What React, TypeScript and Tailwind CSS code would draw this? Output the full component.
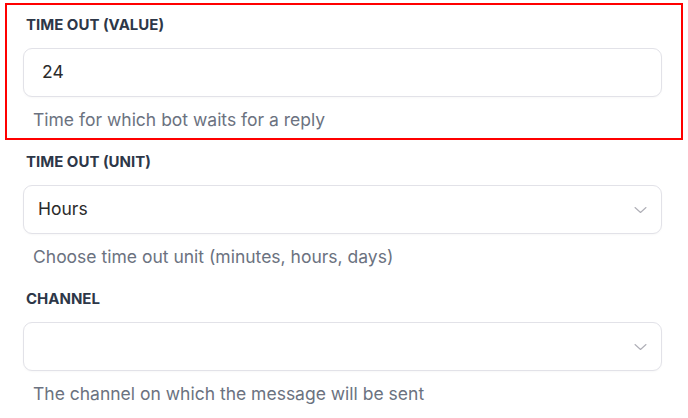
import React from "react";

function Chevron() {
  return (
    <svg width="13" height="8" viewBox="0 0 13 8" fill="none" className="shrink-0">
      <path d="M1 1.5L6.5 6.5L12 1.5" stroke="#aeaeb6" strokeWidth="1.1" strokeLinecap="round" strokeLinejoin="round" />
    </svg>
  );
}

function Field({
  label,
  help,
  children,
  outlined,
}: {
  label: string;
  help: string;
  children: React.ReactNode;
  outlined?: boolean;
}) {
  return (
    <div
      className={
        "flex flex-col pl-[16px] pr-[19px] pt-[11px] pb-[6px] border-2 " +
        (outlined ? "border-[#ff0000]" : "border-transparent")
      }
    >
      <label className="text-[15px] font-bold leading-[18px] text-[#2d3748] pl-[3px]">{label}</label>
      <div className="mt-[14px]">{children}</div>
      <p className="mt-[11px] pl-[10px] text-[17.5px] leading-[24px] text-[#6b7280]">{help}</p>
    </div>
  );
}

export default function App() {
  return (
    <div
      className="w-[688px] h-[418px] bg-white overflow-hidden pt-[3px] pl-[5px] pr-[5px]"
      style={{ fontFamily: "Inter, 'Noto Sans', sans-serif" }}
    >
      <Field label="TIME OUT (VALUE)" help="Time for which bot waits for a reply" outlined>
        <div className="h-[49px] rounded-[9px] border border-[#e2e2e8] bg-white flex items-center pl-[18px] text-[17.5px] text-[#2b2b2b] shadow-[0_1px_2px_rgba(0,0,0,0.03)]">
          24
        </div>
      </Field>
      <Field label="TIME OUT (UNIT)" help="Choose time out unit (minutes, hours, days)">
        <div className="h-[49px] rounded-[9px] border border-[#e2e2e8] bg-white flex items-center justify-between pl-[14px] pr-[14px] text-[17.5px] text-[#2b2b2b] shadow-[0_1px_2px_rgba(0,0,0,0.03)]">
          <span>Hours</span>
          <Chevron />
        </div>
      </Field>
      <Field label="CHANNEL" help="The channel on which the message will be sent">
        <div className="h-[49px] rounded-[9px] border border-[#e2e2e8] bg-white flex items-center justify-end pl-[14px] pr-[14px] shadow-[0_1px_2px_rgba(0,0,0,0.03)]">
          <Chevron />
        </div>
      </Field>
    </div>
  );
}
